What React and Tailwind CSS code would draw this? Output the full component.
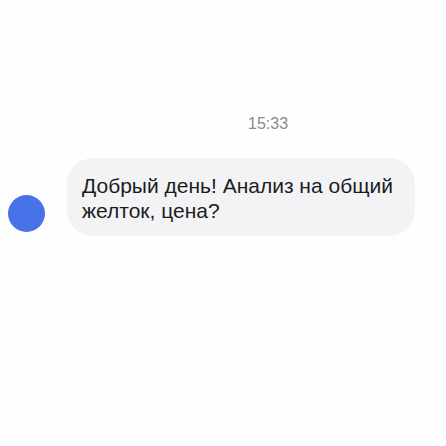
export default function App() {
  return (
    <div
      className="w-[446px] h-[446px] bg-[#fefefe] overflow-hidden"
      style={{ fontFamily: '"Liberation Sans", Arial, sans-serif' }}
    >
      <div className="pt-[115px] flex flex-col">
        {/* TIME */}
        <div className="pl-[248px] text-[16px] leading-[18px] text-[#8a8a8e]">
          15:33
        </div>

        {/* MESSAGE */}
        <div className="mt-[25px] pl-[8px] flex items-end gap-[22px]">
          <div className="w-[37px] h-[37px] mb-[4px] rounded-full bg-[#4a72e8] shrink-0" />
          <div className="w-[348px] rounded-[26px] bg-[#f3f3f6] pl-[15px] pr-[14px] pt-[15px] pb-[13px] text-[21px] leading-[25px] text-[#1c1c1e]">
            Добрый день! Анализ на общий желток, цена?
          </div>
        </div>
      </div>
    </div>
  );
}
